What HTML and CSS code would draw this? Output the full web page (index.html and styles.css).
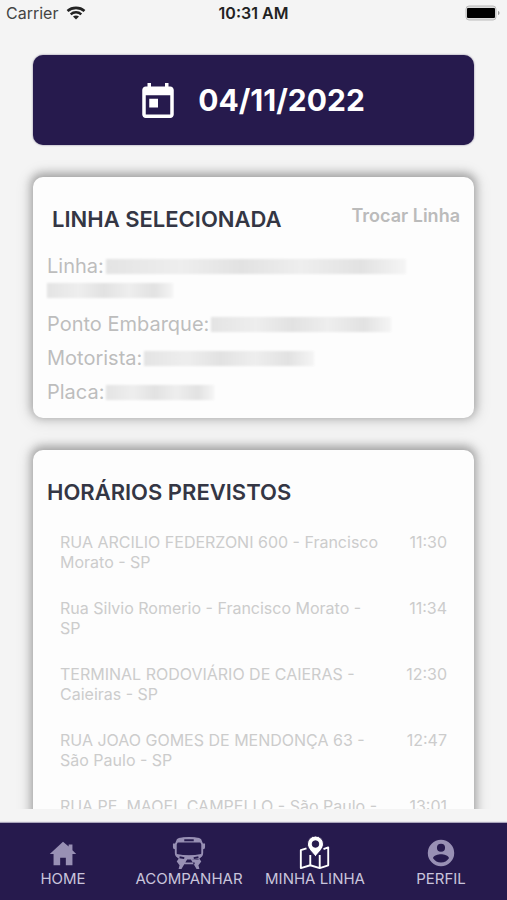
FILE: index.html
```
<!DOCTYPE html>
<html lang="pt-BR">
<head>
    <meta charset="UTF-8">
    <meta name="viewport" content="width=device-width, initial-scale=1.0">
    <title>Minha Linha</title>
    <link rel="stylesheet" href="styles.css">
</head>
<body>
    <header class="status-bar">
        <div class="carrier">
            <span>Carrier</span>
            <svg class="wifi" viewBox="0 0 20 14" aria-hidden="true">
                <path d="M1.500 5C6.200.8 13.800.8 18.500 5" fill="none" stroke="#222" stroke-width="2.600"/>
                <path d="M4.700 8.300c3-2.700 7.600-2.700 10.600 0" fill="none" stroke="#222" stroke-width="2.400"/>
                <path d="M10 13.600L7 10.600c1.700-1.500 4.300-1.500 6 0z" fill="#222"/>
            </svg>
        </div>
        <time class="clock">10:31 AM</time>
        <div class="battery-wrap">
            <svg class="battery" viewBox="0 0 36 16" aria-hidden="true">
                <rect x="1" y="1" width="30" height="14" rx="3" fill="#ddd" stroke="#bbb"/>
                <rect x="2" y="3" width="28" height="10" rx="1" fill="#000"/>
                <path d="M33 6c2 .5 2 3.500 0 4z" fill="#999"/>
            </svg>
        </div>
    </header>

    <main class="content">
        <button class="date-button" type="button">
            <svg class="date-icon" viewBox="3 1 18 20" aria-hidden="true">
                <path fill="#fff" d="M19 3h-1V1h-2v2H8V1H6v2H5c-1.110 0-2 .9-2 2v14c0 1.100.89 2 2 2h14c1.100 0 2-.9 2-2V5c0-1.100-.9-2-2-2zm0 16H5V8h14v11zM7 10h5v5H7z"/>
            </svg>
            <span>04/11/2022</span>
        </button>

        <section class="card line-card">
            <div class="card-header">
                <h2>LINHA SELECIONADA</h2>
                <a class="change-link" href="#">Trocar Linha</a>
            </div>
            <dl class="details">
                <div class="detail">
                    <dt>Linha:</dt>
                    <dd class="hidden-value value-line"></dd>
                    <dd class="hidden-value value-line-rest"></dd>
                </div>
                <div class="detail">
                    <dt>Ponto Embarque:</dt>
                    <dd class="hidden-value value-stop"></dd>
                </div>
                <div class="detail">
                    <dt>Motorista:</dt>
                    <dd class="hidden-value value-driver"></dd>
                </div>
                <div class="detail">
                    <dt>Placa:</dt>
                    <dd class="hidden-value value-plate"></dd>
                </div>
            </dl>
        </section>

        <section class="card schedule-card">
            <h2>HORÁRIOS PREVISTOS</h2>
            <ul class="stops">
                <li>
                    <span class="stop-name">RUA ARCILIO FEDERZONI 600 - Francisco Morato - SP</span>
                    <time>11:30</time>
                </li>
                <li>
                    <span class="stop-name">Rua Silvio Romerio - Francisco Morato - SP</span>
                    <time>11:34</time>
                </li>
                <li>
                    <span class="stop-name">TERMINAL RODOVIÁRIO DE CAIERAS - Caieiras - SP</span>
                    <time>12:30</time>
                </li>
                <li>
                    <span class="stop-name">RUA JOAO GOMES DE MENDONÇA 63 - São Paulo - SP</span>
                    <time>12:47</time>
                </li>
                <li>
                    <span class="stop-name">RUA PE. MAOEL CAMPELLO - São Paulo - SP</span>
                    <time>13:01</time>
                </li>
            </ul>
        </section>
    </main>

    <nav class="tab-bar">
        <a href="#">
            <svg viewBox="0 0 36 36" aria-hidden="true">
                <path fill="currentColor" d="M18 6L4 19h4v12h7v-8h6v8h7V19h4l-4-4V9h-4v2z"/>
            </svg>
            <span>HOME</span>
        </a>
        <a href="#">
            <svg viewBox="0 0 36 36" aria-hidden="true">
                <path fill="none" stroke="currentColor" stroke-width="2" d="M6 4q12-3 24 0l2 5v9q0 4-4 4H8q-4 0-4-4V9z"/>
                <path fill="currentColor" d="M7 2q11-2 22 0l2 5H5zM1 8h3v6H3q-2 0-2-2zM32 8h3v4q0 2-2 2h-1zM5 19q13 3 26 0v3l-3 3H8l-3-3zM7 24l9 1-6 10H7l1-4-3-4zM29 24l-9 1 6 10h3l-1-4 3-4zM12 28h12v2H12z"/>
                <path stroke="#261a4d" stroke-width="2" d="M13 4.500h10M8 22.500l5 1M28 22.500l-5 1"/>
            </svg>
            <span>ACOMPANHAR</span>
        </a>
        <a class="active" href="#" aria-current="page">
            <svg viewBox="0 0 36 36" aria-hidden="true">
                <path fill="none" stroke="currentColor" stroke-width="2" stroke-linejoin="round" d="M9 13l-6 2v19l10-3 10 3 9-3V12l-5 2M13 20v11M23 20v14"/>
                <path fill="currentColor" stroke="#261a4d" stroke-width="1" fill-rule="evenodd" d="M18.500 0a8.500 8.500 0 0 0-8.500 8.500c0 5 5 8.500 8.500 13.500 3.500-5 8.500-8.500 8.500-13.500a8.500 8.500 0 0 0-8.500-8.500zm0 5a3.500 3.500 0 1 1 0 7 3.500 3.500 0 0 1 0-7z"/>
            </svg>
            <span>MINHA LINHA</span>
        </a>
        <a href="#">
            <svg viewBox="0 0 36 36" aria-hidden="true">
                <path fill="currentColor" fill-rule="evenodd" d="M18 4a14 14 0 1 0 0 28 14 14 0 0 0 0-28zm0 4.200a4.300 4.300 0 1 1 0 8.600 4.300 4.300 0 0 1 0-8.600zm0 19.800a10 10 0 0 1-8.400-4.500c0-2.800 5.600-4.300 8.400-4.300s8.400 1.500 8.400 4.300A10 10 0 0 1 18 28z"/>
            </svg>
            <span>PERFIL</span>
        </a>
    </nav>
</body>
</html>
```
FILE: styles.css
```
* {
    box-sizing: border-box;
}
body {
    display: flex;
    flex-direction: column;
    height: 100vh;
    margin: 0;
    background-color: #f4f4f4;
    color: #343644;
    font-family: Inter, "Liberation Sans", sans-serif;
}
h2, dl, dd, ul {
    margin: 0;
    padding: 0;
}
h2 {
    font-size: 22px;
    font-weight: 600;
    line-height: 28px;
}
a {
    text-decoration: none;
}
.status-bar {
    display: grid;
    grid-template-columns: 1fr auto 1fr;
    align-items: center;
    height: 26px;
    padding: 0 6px;
    font-size: 16px;
    color: #444;
}
.carrier {
    display: flex;
    align-items: center;
    gap: 8px;
}
.wifi {
    width: 20px;
    height: 14px;
}
.clock {
    font-weight: 600;
    color: #222;
}
.battery-wrap {
    display: flex;
    justify-content: flex-end;
}
.battery {
    width: 36px;
    height: 16px;
}
.content {
    flex: 1;
    min-height: 0;
    overflow: hidden;
    padding: 29px 33px 0;
}
.date-button {
    display: flex;
    align-items: center;
    justify-content: center;
    gap: 24px;
    width: 100%;
    height: 90px;
    border: none;
    border-radius: 10px;
    background-color: #261a4d;
    color: #fff;
    font-family: inherit;
    font-size: 30px;
    font-weight: 700;
    box-shadow: 0 0 2px rgba(38,26,77,0.6);
}
.date-icon {
    width: 32px;
    height: 35px;
}
.card {
    margin-top: 32px;
    padding: 28px 14px;
    border-radius: 10px;
    background-color: #fdfdfd;
    box-shadow: 0 -2px 8px 2px rgba(0,0,0,0.28), 0 0 14px 6px rgba(0,0,0,0.08);
}
.line-card {
    padding-bottom: 14px;
}
.card-header {
    display: flex;
    justify-content: space-between;
    padding-left: 5px;
}
.change-link {
    font-size: 18px;
    font-weight: 600;
    line-height: 22px;
    color: #bbb;
}
.details {
    display: flex;
    flex-direction: column;
    gap: 10px;
    margin-top: 21px;
    font-size: 20px;
    line-height: 24px;
    color: #bdbdbd;
}
.detail {
    display: flex;
    flex-wrap: wrap;
    align-items: center;
    column-gap: 2px;
}
/* masked personal data */
.hidden-value {
    height: 15px;
    background: linear-gradient(90deg, #e4e4e4, #eeeeee 25%, #e2e2e2 45%, #eeeeee 65%, #e2e2e2 85%, #f5f5f5);
    filter: blur(1px);
}
.value-line {
    width: 300px;
}
.value-line-rest {
    width: 126px;
    margin: 5px 200px 4px 0;
}
.value-stop {
    width: 180px;
}
.value-driver {
    width: 170px;
}
.value-plate {
    width: 108px;
}
.stops {
    display: flex;
    flex-direction: column;
    gap: 26px;
    margin-top: 26px;
    padding: 0 13px;
    list-style: none;
    font-size: 16px;
    line-height: 20px;
    color: #ccc;
}
.stops li {
    display: flex;
    justify-content: space-between;
    gap: 16px;
}
.stop-name {
    max-width: 324px;
}
.tab-bar {
    display: grid;
    grid-template-columns: repeat(4, 1fr);
    height: 77px;
    flex-shrink: 0;
    margin-top: 14px;
    padding: 13px 3px 0 0;
    background-color: #261a4d;
    box-shadow: 0 -1px 1px #aaa5bb;
}
.tab-bar a {
    display: flex;
    flex-direction: column;
    align-items: center;
    color: #9890b4;
    font-size: 15px;
    line-height: 18px;
}
.tab-bar svg {
    width: 34px;
    height: 34px;
}
.tab-bar span {
    color: #c9c4dc;
}
.tab-bar .active {
    color: #fff;
}
```
